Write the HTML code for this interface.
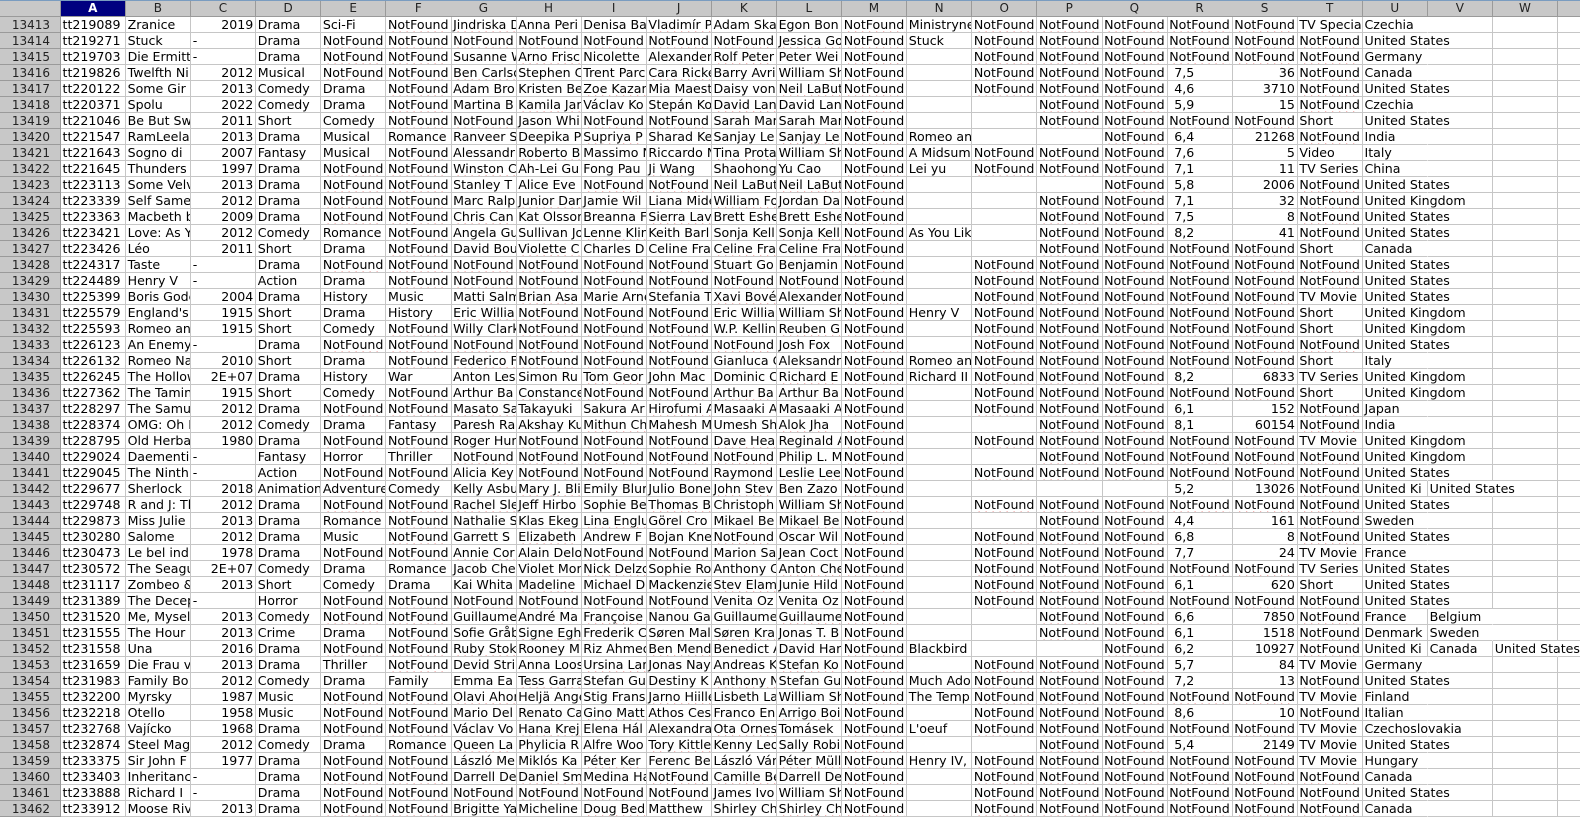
<!DOCTYPE html>
<html><head><meta charset="utf-8"><style>
body{margin:0;width:1580px;height:817px;overflow:hidden;background:#fff;font-family:"DejaVu Sans","Liberation Sans",sans-serif;font-size:12.6px;color:#000;position:relative}
.c{position:absolute;height:16px;line-height:16px;box-sizing:border-box;border-right:1px solid #c6c6c6;border-bottom:1px solid #c6c6c6;white-space:nowrap;overflow:hidden;padding:0 2px}
.h{background:#c8c8c8;border-color:#9a9a9a;text-align:center;color:#222;line-height:17px;height:17px;font-size:12px}
.rh{background:#c8c8c8;border-color:#9a9a9a;text-align:right;padding-right:10px;color:#222;width:61px;left:0;font-size:12px}
.sel{background:#000080;color:#fff;font-weight:bold}
.r{text-align:right}
.o{overflow:visible;z-index:1;border-right-color:transparent}
.w{text-decoration:underline wavy #e02020;text-decoration-thickness:1px;text-underline-offset:2px}
.p{padding-left:7px}
</style></head><body>
<div style="position:absolute;left:0;top:0;width:1580px;height:1px;background:#7a9cc0;z-index:2"></div>
<script>
var NF="NotFound";
var D=`tt219089|Zranice|2019|Drama|Sci-Fi|N|Jindriska D|Anna Peri|Denisa Ba|Vladimír P|Adam Ska|Egon Bon|N|Ministryne|N|N|N|N|N| TV Specia|Czechia
tt219271|Stuck|-|Drama|N|N|N|N|N|N|N|Jessica Go|N|Stuck|N|N|N|N|N|N|United States
tt219703|Die Ermitt|-|Drama|N|N|Susanne W|Arno Frisc|Nicolette|Alexanden|Rolf Peter|Peter Wei|N||N|N|N|N|N|N|Germany
tt219826|Twelfth Ni|2012|Musical|N|N|Ben Carlso|Stephen C|Trent Parc|Cara Ricke|Barry Avri|William Sh|N||N|N|N|7,5|36|N|Canada
tt220122|Some Gir|2013|Comedy|Drama|N|Adam Bro|Kristen Be|Zoe Kazan|Mia Maest|Daisy von|Neil LaBut|N||N|N|N|4,6|3710|N|United States
tt220371|Spolu|2022|Comedy|Drama|N|Martina B|Kamila Jar|Václav Ko|Stepán Ko|David Lan|David Lan|N|||N|N|5,9|15|N|Czechia
tt221046|Be But Sw|2011|Short|Comedy|N|N|Jason Whi|N|N|Sarah Man|Sarah Man|N|||N|N|N|N|Short|United States
tt221547|RamLeela|2013|Drama|Musical|Romance|Ranveer S|Deepika P|Supriya P|Sharad Ke|Sanjay Le|Sanjay Le|N|Romeo an|||N|6,4|21268|N|India
tt221643|Sogno di|2007|Fantasy|Musical|N|Alessandr|Roberto B|Massimo N|Riccardo N|Tina Prota|William Sh|N|A Midsum|N|N|N|7,6|5|Video|Italy
tt221645|Thunders|1997|Drama|N|N|Winston C|Ah-Lei Gu|Fong Pau|Ji Wang|Shaohong|Yu Cao|N|Lei yu|N|N|N|7,1|11|TV Series|China
tt223113|Some Velv|2013|Drama|N|N|Stanley T|Alice Eve|N|N|Neil LaBut|Neil LaBut|N||||N|5,8|2006|N|United States
tt223339|Self Same|2012|Drama|N|N|Marc Ralp|Junior Dar|Jamie Wil|Liana Mide|William Fo|Jordan Da|N|||N|N|7,1|32|N|United Kingdom
tt223363|Macbeth b|2009|Drama|N|N|Chris Can|Kat Olsson|Breanna F|Sierra Lav|Brett Eshe|Brett Eshe|N|||N|N|7,5|8|N|United States
tt223421|Love: As Y|2012|Comedy|Romance|N|Angela Gu|Sullivan Jo|Lenne Klin|Keith Barl|Sonja Kell|Sonja Kell|N|As You Lik||N|N|8,2|41|N|United States
tt223426|Léo|2011|Short|Drama|N|David Bou|Violette C|Charles D|Celine Fra|Celine Fra|Celine Fra|N|||N|N|N|N|Short|Canada
tt224317|Taste|-|Drama|N|N|N|N|N|N|Stuart Go|Benjamin|N||N|N|N|N|N|N|United States
tt224489|Henry V|-|Action|Drama|N|N|N|N|N|N|N|N||N|N|N|N|N|N|United States
tt225399|Boris Gode|2004|Drama|History|Music|Matti Salm|Brian Asa|Marie Arne|Stefania T|Xavi Bové|Alexander|N||N|N|N|N|N|TV Movie|United States
tt225579|England's|1915|Short|Drama|History|Eric Willia|N|N|N|Eric Willia|William Sh|N|Henry V|N|N|N|N|N|Short|United Kingdom
tt225593|Romeo an|1915|Short|Comedy|N|Willy Clark|N|N|N|W.P. Kellin|Reuben G|N||N|N|N|N|N|Short|United Kingdom
tt226123|An Enemy|-|Drama|N|N|N|N|N|N|N|Josh Fox|N||N|N|N|N|N|N|United States
tt226132|Romeo Na|2010|Short|Drama|N|Federico F|N|N|N|Gianluca C|Aleksandr|N|Romeo an|N|N|N|N|N|Short|Italy
tt226245|The Hollow|2E+07|Drama|History|War|Anton Les|Simon Ru|Tom Geor|John Mac|Dominic C|Richard E|N|Richard II|N|N|N|8,2|6833|TV Series|United Kingdom
tt227362|The Tamin|1915|Short|Comedy|N|Arthur Ba|Constance|N|N|Arthur Ba|Arthur Ba|N||N|N|N|N|N|Short|United Kingdom
tt228297|The Samu|2012|Drama|N|N|Masato Sa|Takayuki|Sakura Ar|Hirofumi A|Masaaki A|Masaaki A|N||N|N|N|6,1|152|N|Japan
tt228374|OMG: Oh M|2012|Comedy|Drama|Fantasy|Paresh Ra|Akshay Ku|Mithun Ch|Mahesh M|Umesh Sh|Alok Jha|N|||N|N|8,1|60154|N|India
tt228795|Old Herba|1980|Drama|N|N|Roger Hun|N|N|N|Dave Hea|Reginald A|N||N|N|N|N|N|TV Movie|United Kingdom
tt229024|Daementi|-|Fantasy|Horror|Thriller|N|N|N|N|N|Philip L. M|N|||N|N|N|N|N|United Kingdom
tt229045|The Ninth|-|Action|N|N|Alicia Key|N|N|N|Raymond|Leslie Lee|N||N|N|N|N|N|N|United States
tt229677|Sherlock|2018|Animation|Adventure|Comedy|Kelly Asbu|Mary J. Bli|Emily Blun|Julio Bone|John Stev|Ben Zazo|N|||||5,2|13026|N|United Ki|United States
tt229748|R and J: Th|2012|Drama|N|N|Rachel Sle|Jeff Hirbo|Sophie Be|Thomas B|Christoph|William Sh|N||N|N|N|N|N|N|United States
tt229873|Miss Julie|2013|Drama|Romance|N|Nathalie S|Klas Ekeg|Lina Englu|Görel Cro|Mikael Be|Mikael Be|N|||N|N|4,4|161|N|Sweden
tt230280|Salome|2012|Drama|Music|N|Garrett S|Elizabeth|Andrew F|Bojan Kne|N|Oscar Wil|N||N|N|N|6,8|8|N|United States
tt230473|Le bel ind|1978|Drama|N|N|Annie Cor|Alain Delo|N|N|Marion Sa|Jean Coct|N||N|N|N|7,7|24|TV Movie|France
tt230572|The Seagu|2E+07|Comedy|Drama|Romance|Jacob Che|Violet Mor|Nick Delzo|Sophie Ro|Anthony C|Anton Che|N||N|N|N|N|N|TV Series|United States
tt231117|Zombeo &|2013|Short|Comedy|Drama|Kai Whita|Madeline|Michael D|Mackenzie|Stev Elam|Junie Hild|N||N|N|N|6,1|620|Short|United States
tt231389|The Decep|-|Horror|N|N|N|N|N|N|Venita Oz|Venita Oz|N||N|N|N|N|N|N|United States
tt231520|Me, Mysel|2013|Comedy|N|N|Guillaume|André Ma|Françoise|Nanou Ga|Guillaume|Guillaume|N|||N|N|6,6|7850|N|France|Belgium
tt231555|The Hour|2013|Crime|Drama|N|Sofie Gråb|Signe Egh|Frederik C|Søren Mal|Søren Kra|Jonas T. B|N|||N|N|6,1|1518|N|Denmark|Sweden
tt231558|Una|2016|Drama|N|N|Ruby Stok|Rooney M|Riz Ahmed|Ben Mend|Benedict A|David Har|N|Blackbird|||N|6,2|10927|N|United Ki|Canada|United States
tt231659|Die Frau v|2013|Drama|Thriller|N|Devid Stri|Anna Loos|Ursina Lar|Jonas Nay|Andreas K|Stefan Ko|N||N|N|N|5,7|84|TV Movie|Germany
tt231983|Family Bo|2012|Comedy|Drama|Family|Emma Ea|Tess Garra|Stefan Gu|Destiny K|Anthony N|Stefan Gu|N|Much Ado|N|N|N|7,2|13|N|United States
tt232200|Myrsky|1987|Music|N|N|Olavi Ahor|Heljä Ange|Stig Frans|Jarno Hiille|Lisbeth La|William Sh|N|The Temp|N|N|N|N|N|TV Movie|Finland
tt232218|Otello|1958|Music|N|N|Mario Del|Renato Ca|Gino Matt|Athos Ces|Franco En|Arrigo Boi|N||N|N|N|8,6|10|N|Italian
tt232768|Vajícko|1968|Drama|N|N|Václav Vo|Hana Krej|Elena Hál|Alexandra|Ota Ornes|Tomásek|N|L'oeuf|N|N|N|N|N|TV Movie|Czechoslovakia
tt232874|Steel Mag|2012|Comedy|Drama|Romance|Queen La|Phylicia R|Alfre Woo|Tory Kittle|Kenny Leo|Sally Robi|N|||N|N|5,4|2149|TV Movie|United States
tt233375|Sir John F|1977|Drama|N|N|László Me|Miklós Ka|Péter Ker|Ferenc Be|László Ván|Péter Müll|N|Henry IV,|N|N|N|N|N|TV Movie|Hungary
tt233403|Inheritanc|-|Drama|N|N|Darrell De|Daniel Sm|Medina Ha|N|Camille Be|Darrell De|N||N|N|N|N|N|N|Canada
tt233888|Richard I|-|Drama|N|N|N|N|N|N|James Ivo|William Sh|N||N|N|N|N|N|N|United States
tt233912|Moose Riv|2013|Drama|N|N|Brigitte Ya|Micheline|Doug Bed|Matthew|Shirley Ch|Shirley Ch|N||N|N|N|N|N|N|Canada`.split("\n");
var W=65.1,X0=60.5,out=[];
var L="ABCDEFGHIJKLMNOPQRSTUVW".split("");
out.push('<div class="c h" style="left:0;top:0;width:61px"></div>');
for(var i=0;i<24;i++){var x=X0+i*W;out.push('<div class="c h'+(i==0?' sel':'')+'" style="left:'+x+'px;top:0;width:'+(W+0.5)+'px">'+(L[i]||'')+'</div>');}
D.forEach(function(line,r){
 var y=17+r*16,f=line.split("|");
 out.push('<div class="c rh" style="top:'+y+'px">'+(13413+r)+'</div>');
 for(var i=0;i<24;i++){
  var v=f[i]||"",cls="c",x=X0+i*W;
  if(v=="N"){v=NF;cls+=" w";}
  else if(i==2&&v!="-"||i==18&&v!="") cls+=" r";
  else if(i==17&&v) cls+=" p";
  else if(i>=6&&i<=11&&v&&(r+i)%3==0) cls+=" w";
  if(i>=20&&v&&!f[i+1]) cls+=" o";
  out.push('<div class="'+cls+'" style="left:'+x+'px;top:'+y+'px;width:'+(W+0.5)+'px">'+(cls.indexOf(" w")>=0?'<span class="w">'+v+'</span>':v)+'</div>');
 }
});
document.write(out.join(""));
</script>
</body></html>
